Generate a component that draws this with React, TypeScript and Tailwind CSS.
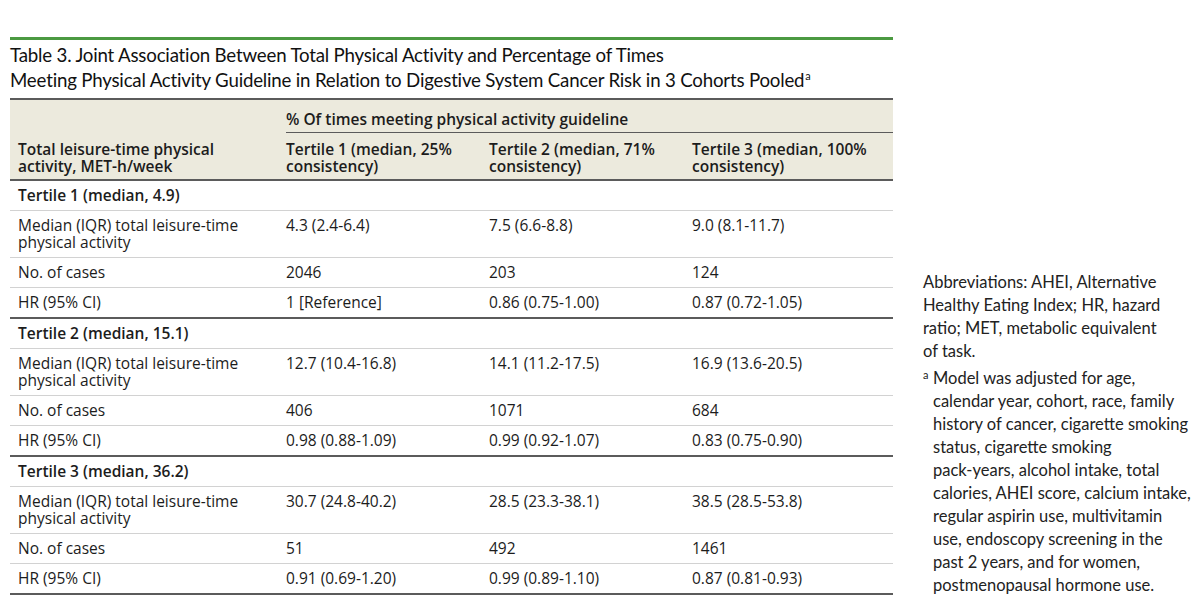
const rows = [
  {
    group: "Tertile 1 (median, 4.9)",
    median: ["4.3 (2.4-6.4)", "7.5 (6.6-8.8)", "9.0 (8.1-11.7)"],
    cases: ["2046", "203", "124"],
    hr: ["1 [Reference]", "0.86 (0.75-1.00)", "0.87 (0.72-1.05)"],
  },
  {
    group: "Tertile 2 (median, 15.1)",
    median: ["12.7 (10.4-16.8)", "14.1 (11.2-17.5)", "16.9 (13.6-20.5)"],
    cases: ["406", "1071", "684"],
    hr: ["0.98 (0.88-1.09)", "0.99 (0.92-1.07)", "0.83 (0.75-0.90)"],
  },
  {
    group: "Tertile 3 (median, 36.2)",
    median: ["30.7 (24.8-40.2)", "28.5 (23.3-38.1)", "38.5 (28.5-53.8)"],
    cases: ["51", "492", "1461"],
    hr: ["0.91 (0.69-1.20)", "0.99 (0.89-1.10)", "0.87 (0.81-0.93)"],
  },
]

const cell = "pt-[6px] pb-[6px] align-top whitespace-nowrap"

const notaA = [
  "Model was adjusted for age,",
  "calendar year, cohort, race, family",
  "history of cancer, cigarette smoking",
  "status, cigarette smoking",
  "pack-years, alcohol intake, total",
  "calories, AHEI score, calcium intake,",
  "regular aspirin use, multivitamin",
  "use, endoscopy screening in the",
  "past 2 years, and for women,",
  "postmenopausal hormone use.",
]

export default function App() {
  return (
    <div className="w-[1199px] h-[613px] bg-white text-[#1c1c1c] flex overflow-hidden">
      <div className="ml-[10px] w-[883px] shrink-0 pt-[37px]">
        <div className="border-t-[3px] border-[#4b9a41] pt-[3px] pb-[5px] font-['Lato',sans-serif] text-[18.7px] leading-[25px] tracking-[-0.2px] text-[#111]">
          <div className="h-[25px]">Table 3. Joint Association Between Total Physical Activity and Percentage of Times</div>
          <div className="h-[25px]">
            Meeting Physical Activity Guideline in Relation to Digestive System Cancer Risk in 3 Cohorts Pooled
            <span className="relative -top-[7px] ml-[1px] text-[11px] leading-none">a</span>
          </div>
        </div>
        <table className="w-[883px] border-collapse table-fixed font-['Open_Sans',sans-serif] text-[15.5px] leading-[17px]">
          <colgroup>
            <col className="w-[276px]" />
            <col className="w-[203px]" />
            <col className="w-[203px]" />
            <col className="w-[201px]" />
          </colgroup>
          <thead className="bg-[#eceadd]">
            <tr className="border-t-2 border-[#5b5b5b]">
              <th rowSpan={2} className="pl-[8px] pb-[4px] text-left align-bottom font-semibold leading-[17px]">
                Total leisure-time physical
                <br />
                activity, MET-h/week
              </th>
              <th colSpan={3} className="pt-[11px] pb-[4px] text-left font-semibold border-b border-[#5b5b5b]">
                % Of times meeting physical activity guideline
              </th>
            </tr>
            <tr className="border-b-2 border-[#5b5b5b]">
              {["25%", "71%", "100%"].map((p, i) => (
                <th key={p} className="pt-[8px] pb-[4px] text-left align-top font-semibold leading-[17px] whitespace-nowrap">
                  Tertile {i + 1} (median, {p}
                  <br />
                  consistency)
                </th>
              ))}
            </tr>
          </thead>
          <tbody>
            {rows.map((r, gi) => (
              <FilasGrupo key={gi} r={r} />
            ))}
          </tbody>
        </table>
      </div>
      <div className="ml-[30px] pt-[271px] font-['Lato',sans-serif] text-[16.5px] leading-[23px] text-[#222] whitespace-nowrap">
        <p>
          Abbreviations: AHEI, Alternative
          <br />
          Healthy Eating Index; HR, hazard
          <br />
          ratio; MET, metabolic equivalent
          <br />
          of task.
        </p>
        <div className="mt-[4px] flex">
          <span className="w-[10px] shrink-0 text-[11px] leading-[16px]">a</span>
          <p>
            {notaA.map((l) => (
              <span key={l} className="block">
                {l}
              </span>
            ))}
          </p>
        </div>
      </div>
    </div>
  )
}

function FilasGrupo({ r }: { r: (typeof rows)[number] }) {
  return (
    <>
      <tr className="border-b border-[#d2d2d2]">
        <td colSpan={4} className={`${cell} pl-[8px] font-semibold`}>
          {r.group}
        </td>
      </tr>
      <tr className="border-b border-[#d2d2d2]">
        <td className={`${cell} pl-[8px]`}>
          Median (IQR) total leisure-time
          <br />
          physical activity
        </td>
        {r.median.map((v, i) => (
          <td key={i} className={cell}>
            {v}
          </td>
        ))}
      </tr>
      <tr className="border-b border-[#d2d2d2]">
        <td className={`${cell} pl-[8px]`}>No. of cases</td>
        {r.cases.map((v, i) => (
          <td key={i} className={cell}>
            {v}
          </td>
        ))}
      </tr>
      <tr className="border-b-2 border-[#5b5b5b]">
        <td className={`${cell} pl-[8px]`}>HR (95% CI)</td>
        {r.hr.map((v, i) => (
          <td key={i} className={cell}>
            {v}
          </td>
        ))}
      </tr>
    </>
  )
}
